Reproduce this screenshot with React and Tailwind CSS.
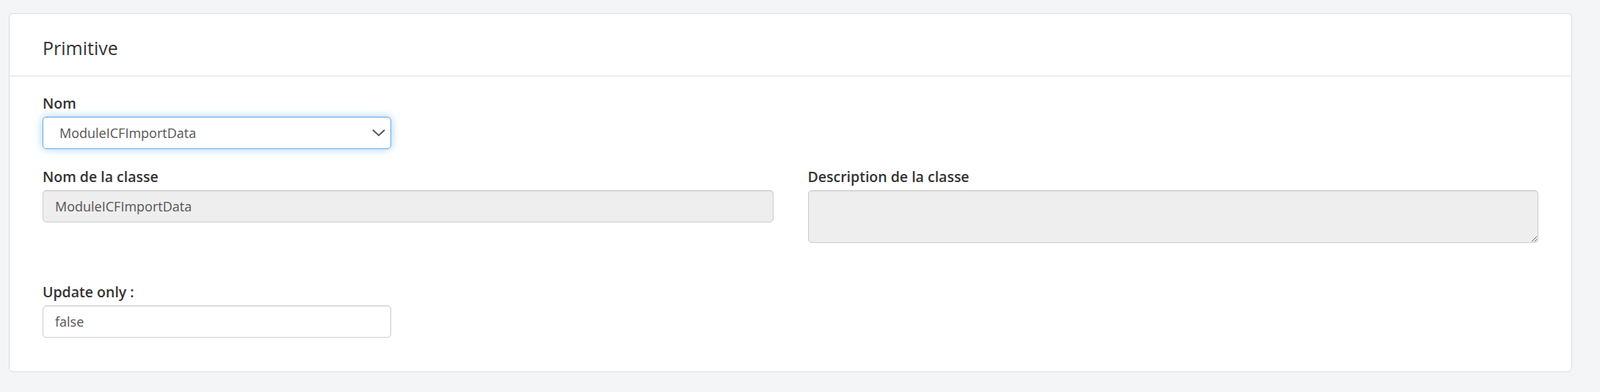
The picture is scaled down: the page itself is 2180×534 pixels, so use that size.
import { useState } from "react"

const ChevronDown = () => (
  <svg width="18" height="10" viewBox="0 0 18 10" fill="none" className="text-[#555]">
    <polyline points="1,1 9,8.5 17,1" stroke="currentColor" strokeWidth="2" />
  </svg>
)

const Label = ({ children }) => (
  <label className="block mb-[4px] text-[19.5px] leading-[28px] font-semibold text-[#333]">{children}</label>
)

export default function App() {
  const [nom, setNom] = useState("ModuleICFImportData")

  return (
    <div className="h-[534px] bg-[#f4f5f7] pt-[18px] pl-[12px] pr-[38px] font-['Open_Sans',sans-serif]">
      <div className="bg-white border border-[#dcdcdc] rounded-[6px]">
        {/* Header */}
        <div className="px-[45px] pt-[29px] pb-[20px] border-b border-[#e0e0e0]">
          <h2 className="text-[25px] leading-[35px] font-medium text-[#333]">Primitive</h2>
        </div>

        {/* Body */}
        <div className="px-[45px] pt-[23px] pb-[46px]">
          <div className="mb-[24px]">
            <Label>Nom</Label>
            <div className="relative w-[475px]">
              <select
                value={nom}
                onChange={(e) => setNom(e.target.value)}
                className="appearance-none w-full h-[44px] pl-[22px] pr-[40px] text-[18px] text-[#555] bg-white border border-[#66afe9] rounded-[5px] outline-none shadow-[inset_0_1px_1px_rgba(0,0,0,0.075),0_0_11px_rgba(102,175,233,0.6)]"
              >
                <option>ModuleICFImportData</option>
              </select>
              <span className="absolute right-[8px] top-[17px] pointer-events-none">
                <ChevronDown />
              </span>
            </div>
          </div>

          <div className="grid grid-cols-2 gap-x-[47px]">
            <div>
              <Label>Nom de la classe</Label>
              <input
                type="text"
                disabled
                value="ModuleICFImportData"
                className="w-full h-[44px] px-[16px] text-[18px] text-[#555] bg-[#eee] border border-[#ccc] rounded-[5px] shadow-[inset_0_1px_1px_rgba(0,0,0,0.075)]"
              />
            </div>
            <div>
              <Label>Description de la classe</Label>
              <textarea
                readOnly
                className="block w-full h-[72px] px-[16px] py-[8px] text-[18px] text-[#555] bg-[#eee] border border-[#ccc] rounded-[5px] resize outline-none shadow-[inset_0_1px_1px_rgba(0,0,0,0.075)]"
              />
            </div>
          </div>

          <div className="mt-[53px]">
            <Label>Update only :</Label>
            <input
              type="text"
              readOnly
              value="false"
              className="w-[475px] h-[44px] px-[16px] text-[18px] text-[#555] bg-white border border-[#ccc] rounded-[5px] outline-none shadow-[inset_0_1px_1px_rgba(0,0,0,0.075)]"
            />
          </div>
        </div>
      </div>
    </div>
  )
}
